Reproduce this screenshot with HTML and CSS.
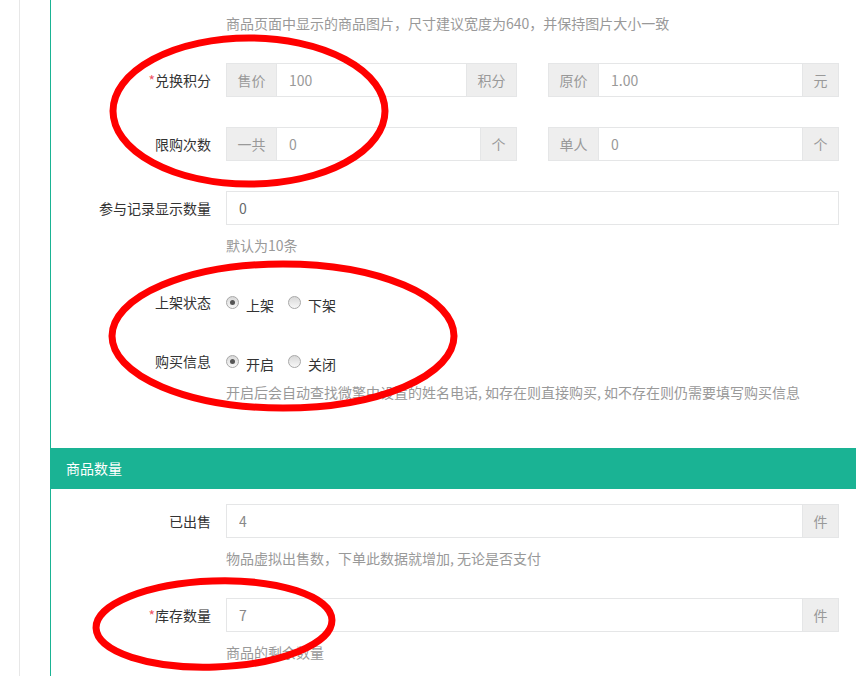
FILE: index.html
```html
<!DOCTYPE html>
<html lang="zh-CN">
<head>
    <meta charset="UTF-8">
    <meta name="viewport" content="width=device-width, initial-scale=1.0">
    <title>商品编辑</title>
    <link rel="stylesheet" href="styles.css">
</head>
<body>

<div class="page">
    <div class="panel">
        <div class="panel-body first">
            <div class="form-group">
                <label class="control-label"></label>
                <div class="controls">
                    <div class="help-block">商品页面中显示的商品图片，尺寸建议宽度为640，并保持图片大小一致</div>
                </div>
            </div>

            <div class="form-group">
                <label class="control-label"><span class="req">*</span>兑换积分</label>
                <div class="controls cols-2">
                    <div class="input-group">
                        <span class="addon first">售价</span>
                        <input class="input" type="text" value="100">
                        <span class="addon last">积分</span>
                    </div>
                    <div class="input-group">
                        <span class="addon first">原价</span>
                        <input class="input" type="text" value="1.00">
                        <span class="addon last narrow">元</span>
                    </div>
                </div>
            </div>

            <div class="form-group">
                <label class="control-label">限购次数</label>
                <div class="controls cols-2">
                    <div class="input-group">
                        <span class="addon first">一共</span>
                        <input class="input" type="text" value="0">
                        <span class="addon last narrow">个</span>
                    </div>
                    <div class="input-group">
                        <span class="addon first">单人</span>
                        <input class="input" type="text" value="0">
                        <span class="addon last narrow">个</span>
                    </div>
                </div>
            </div>

            <div class="form-group">
                <label class="control-label">参与记录显示数量</label>
                <div class="controls">
                    <input class="input full dark" type="text" value="0">
                    <div class="help-block">默认为10条</div>
                </div>
            </div>

            <div class="form-group radio-row">
                <label class="control-label">上架状态</label>
                <div class="controls">
                    <div class="radio-list">
                        <span class="radio checked"></span><span class="radio-text">上架</span>
                        <span class="radio"></span><span class="radio-text">下架</span>
                    </div>
                </div>
            </div>

            <div class="form-group radio-row">
                <label class="control-label">购买信息</label>
                <div class="controls">
                    <div class="radio-list">
                        <span class="radio checked"></span><span class="radio-text">开启</span>
                        <span class="radio"></span><span class="radio-text">关闭</span>
                    </div>
                    <div class="help-block">开启后会自动查找微擎中设置的姓名电话, 如存在则直接购买, 如不存在则仍需要填写购买信息</div>
                </div>
            </div>
        </div>

        <div class="panel-heading">商品数量</div>

        <div class="panel-body second">
            <div class="form-group">
                <label class="control-label">已出售</label>
                <div class="controls">
                    <div class="input-group">
                        <input class="input mid" type="text" value="4">
                        <span class="addon last narrow">件</span>
                    </div>
                    <div class="help-block">物品虚拟出售数，下单此数据就增加, 无论是否支付</div>
                </div>
            </div>

            <div class="form-group">
                <label class="control-label"><span class="req">*</span>库存数量</label>
                <div class="controls">
                    <div class="input-group">
                        <input class="input mid" type="text" value="7">
                        <span class="addon last narrow">件</span>
                    </div>
                    <div class="help-block">商品的剩余数量</div>
                </div>
            </div>
        </div>
    </div>
</div>

<!-- 红色圈注 -->
<svg class="marks" width="856" height="676" viewBox="0 0 856 676">
    <ellipse cx="249" cy="111" rx="136" ry="73"/>
    <ellipse cx="283" cy="336" rx="171" ry="72"/>
    <ellipse cx="214" cy="624" rx="118" ry="43" transform="rotate(-2 214 624)"/>
</svg>

</body>
</html>
```

FILE: styles.css
```css
body {
    margin: 0;
    font-family: "Noto Sans CJK SC", "Microsoft YaHei", sans-serif;
    font-size: 14px;
    color: #333;
    background-color: #fff;
    overflow: hidden;
}
.page {
    margin-left: 19px;
    border-left: 1px solid #e7e7e7;
    padding-left: 30px;
    height: 676px;
}
.panel {
    border-left: 1px solid #1ab394;
    height: 100%;
}
.panel-body {
    display: flow-root;
}
.panel-body.first {
    padding-top: 3px;
}
.panel-body.second {
    padding-top: 15px;
}
.panel-heading {
    margin-top: 21px;
    height: 41px;
    line-height: 41px;
    padding-left: 15px;
    background-color: #1ab394;
    color: #fff;
}
.form-group {
    display: flex;
    margin-bottom: 30px;
}
.form-group.radio-row {
    margin-bottom: 25px;
}
.control-label {
    width: 175px;
    flex-shrink: 0;
    box-sizing: border-box;
    padding-right: 15px;
    text-align: right;
    line-height: 34px;
}
.req {
    color: #ed5565;
}
.controls {
    width: 613px;
}
.cols-2 {
    display: grid;
    grid-template-columns: 1fr 1fr;
    column-gap: 31px;
}
.input-group {
    display: flex;
    height: 34px;
}
.addon {
    width: 50px;
    flex-shrink: 0;
    box-sizing: border-box;
    background-color: #eee;
    border: 1px solid #e5e6e7;
    color: #999;
    text-align: center;
    line-height: 32px;
}
.addon.narrow {
    width: 36px;
}
.addon.first {
    border-right: 0;
}
.addon.last {
    border-left: 0;
}
.input {
    flex: 1;
    min-width: 0;
    height: 34px;
    box-sizing: border-box;
    margin: 0;
    padding: 0 12px;
    border: 1px solid #e5e6e7;
    border-radius: 0;
    font-family: inherit;
    font-size: 14px;
    color: #999;
    background-color: #fff;
    outline: none;
}
.input.full {
    display: block;
    width: 100%;
}
.input.dark {
    color: #676a6c;
}
.input.mid {
    color: #888;
}
.help-block {
    margin-top: 10px;
    line-height: 20px;
    color: #999;
}
.radio-row .help-block {
    margin-top: 4px;
}
.radio-list {
    display: flex;
    align-items: center;
    height: 34px;
}
.radio {
    position: relative;
    width: 13px;
    height: 13px;
    box-sizing: border-box;
    border: 1px solid #a8a8a8;
    border-radius: 50%;
    background: linear-gradient(#d8d8d8, #f8f8f8);
    margin-right: 7px;
}
.radio.checked::after {
    content: "";
    position: absolute;
    left: 3px;
    top: 3px;
    width: 5px;
    height: 5px;
    border-radius: 50%;
    background-color: #555;
}
.radio-text {
    padding-top: 6px;
    margin-right: 14px;
}
.marks {
    position: absolute;
    left: 0;
    top: 0;
    pointer-events: none;
}
.marks ellipse {
    fill: none;
    stroke: #f00;
    stroke-width: 7;
}
```
